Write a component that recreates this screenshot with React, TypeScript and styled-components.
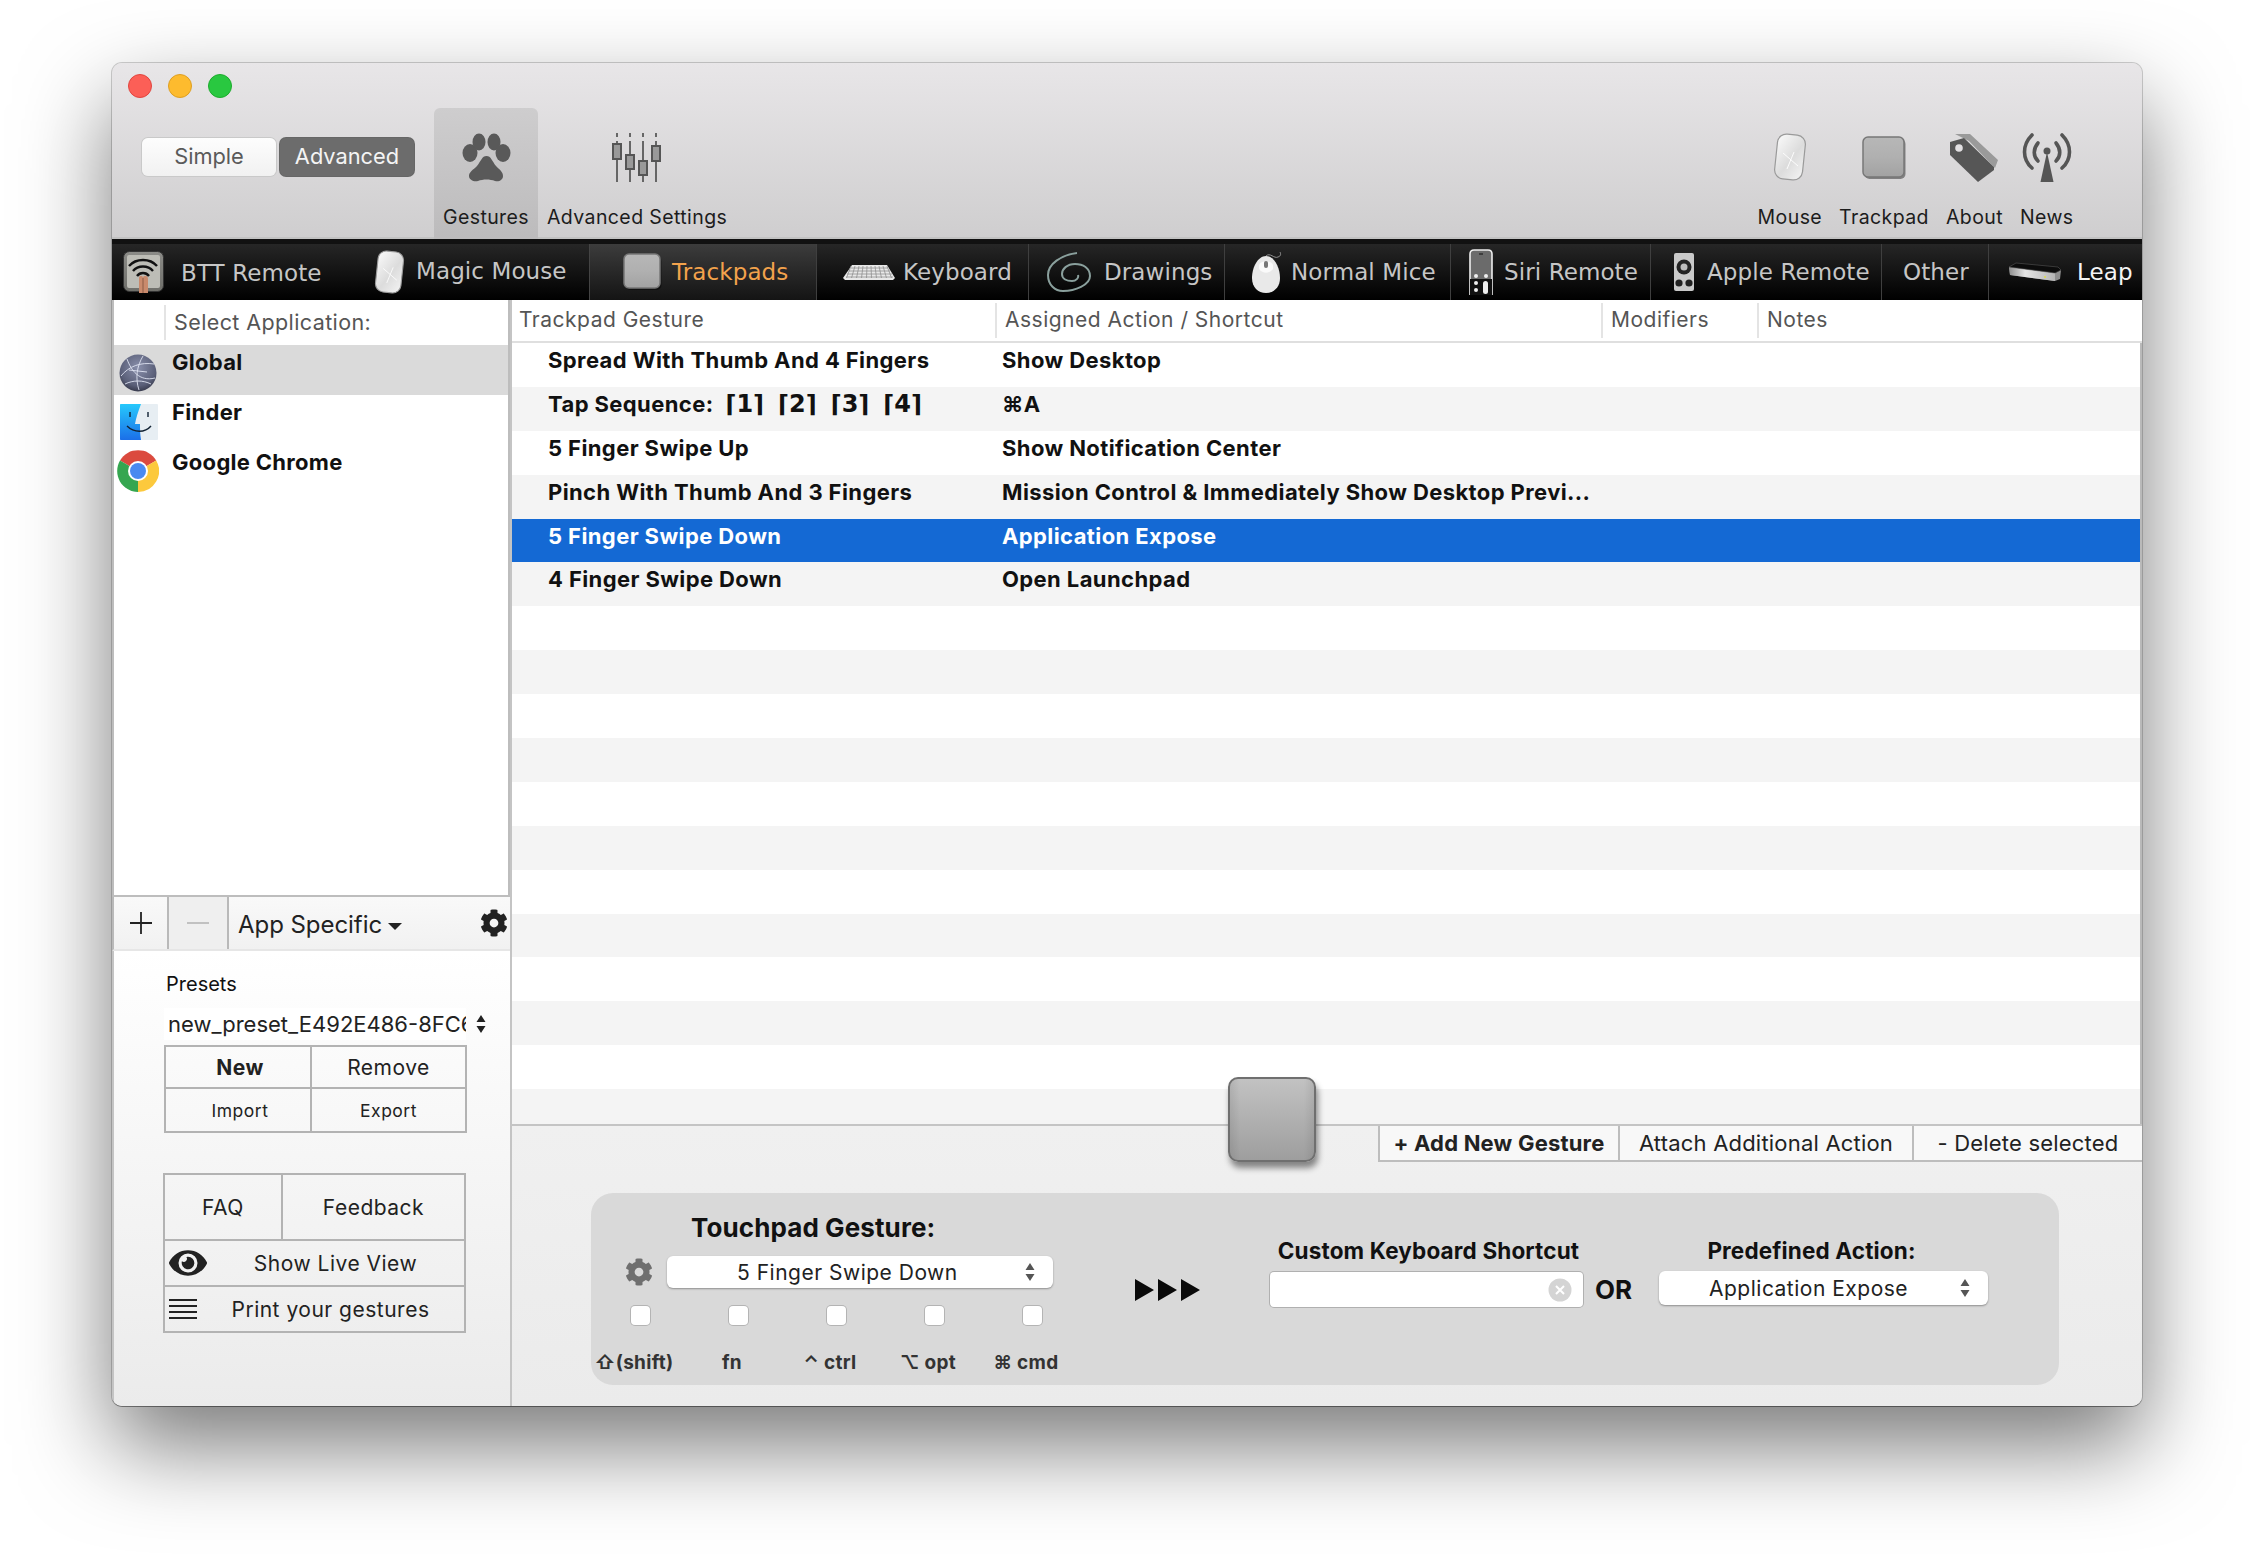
import React from "react";
import styled, { createGlobalStyle } from "styled-components";
import { FaCog, FaEye } from "react-icons/fa";

const Global = createGlobalStyle`
  html, body { margin: 0; padding: 0; background: #fff; width: 2254px; height: 1566px; overflow: hidden; }
  * { box-sizing: border-box; }
  body { font-family: Inter, "Noto Sans", "DejaVu Sans", sans-serif; }
`;

const Page = styled.div`
  width: 2254px; height: 1566px; padding: 63px 0 0 112px;
`;
const Win = styled.div`
  width: 2030px; height: 1343px; border-radius: 10px; display: flex; flex-direction: column;
  box-shadow: 0 40px 90px rgba(0,0,0,.53), 0 0 0 1px rgba(0,0,0,.18), 0 1px 0 rgba(0,0,0,.3);
  position: relative; overflow: hidden; background: #ececec;
`;
const TitleArea = styled.header`
  height: 176px; flex: none; background: linear-gradient(#e8e6e8, #cfcecf); display: flex; flex-direction: column;
  border-bottom: 2px solid #c2c2c2;
`;
const Lights = styled.div`
  height: 45px; flex: none; padding: 11px 0 0 16px; display: flex; gap: 16px;
`;
const Light = styled.span<{ $c: string; $b: string }>`
  width: 24px; height: 24px; border-radius: 50%; background: ${p => p.$c}; border: 1px solid ${p => p.$b};
`;
const ToolRow = styled.div`
  flex: 1; display: flex; padding: 0 60px 0 30px;
`;
const Segment = styled.div`
  display: flex; gap: 4px; margin: 30px 20px 0 0;
`;
const SegBtn = styled.div<{ $on?: boolean }>`
  width: 134px; height: 38px; border-radius: 6px; display: flex; align-items: center; justify-content: center;
  font-size: 21.8px; padding-bottom: 2px;
  color: ${p => (p.$on ? "#f4f4f4" : "#5a5a5a")};
  background: ${p => (p.$on ? "#6c6c6c" : "linear-gradient(#fdfdfd,#f1f1f1)")};
  box-shadow: 0 0 0 1px ${p => (p.$on ? "#666" : "#c9c9c9")};
`;
const ToolItem = styled.div<{ $active?: boolean }>`
  display: flex; flex-direction: column; align-items: center; padding: 25px 9px 0;
  border-radius: 6px 6px 0 0; height: 131px;
  background: ${p => (p.$active ? "linear-gradient(#cecdce,#bcbbbc)" : "transparent")};
`;
const ToolIcon = styled.div<{ $top?: number }>`
  height: 50px; display: flex; align-items: flex-start; justify-content: center; padding-top: ${p => p.$top ?? 0}px;
`;
const ToolLabel = styled.div`
  margin-top: 22px; font-size: 19.5px; line-height: 24px; color: #1c1c1c; white-space: nowrap; letter-spacing: .4px;
`;
const RightTools = styled.div`
  margin-left: auto; display: flex;
  & > div { padding-left: 8.5px; padding-right: 8.5px; }
`;

const TabBar = styled.nav`
  height: 61px; flex: none; display: flex; border-top: 5px solid #111;
  background: linear-gradient(#262626, #000);
`;
const Tab = styled.div<{ $w: number; $pl: number; $sep?: boolean; $active?: boolean }>`
  width: ${p => p.$w}px; flex: none; padding-left: ${p => p.$pl}px; display: flex; align-items: center;
  ${p => (p.$sep ? "border-right: 1px solid #3f3f3f;" : "")}
  ${p => (p.$active ? "background: linear-gradient(#3c3c3c,#141414); border-left: 1px solid #444;" : "")}
`;
const TabText = styled.span<{ $x: number; $on?: boolean; $white?: boolean; $dy?: number }>`
  font-family: "DejaVu Sans", sans-serif; font-size: 23px; white-space: nowrap; margin-left: ${p => p.$x}px;
  position: relative; top: ${p => p.$dy ?? 0}px;
  color: ${p => (p.$on ? "#f2a24c" : p.$white ? "#f4f4f4" : "#c6c6c6")};
  letter-spacing: .1px;
`;

const Main = styled.div`
  flex: 1; display: flex; min-height: 0;
`;
const Sidebar = styled.aside`
  width: 398px; flex: none; display: flex; flex-direction: column;
`;
const AppList = styled.div`
  height: 597px; flex: none; background: #fff; border: solid #bdbdbd; border-width: 0 2px 2px;
`;
const AppHeader = styled.div`
  height: 45px; padding: 5px 0 0 50px;
`;
const AppHeaderCell = styled.div`
  height: 35px; border-left: 2px solid #e4e4e4; padding-left: 8px; font-size: 21.5px; line-height: 34px; color: #555;
  letter-spacing: .4px;
`;
const AppRow = styled.div<{ $on?: boolean }>`
  height: 50px; position: relative; padding-left: 58px; display: flex; font-size: 22px; font-weight: 700; color: #111;
  line-height: 34px; letter-spacing: .3px; background: ${p => (p.$on ? "#dadada" : "transparent")};
`;
const AppIcon = styled.span<{ $l: number; $t: number }>`
  position: absolute; left: ${p => p.$l}px; top: ${p => p.$t}px; display: flex;
`;
const BarRow = styled.div`
  height: 54px; flex: none; display: flex; align-items: stretch; background: linear-gradient(#f9f9f9,#f1f1f1);
  border-bottom: 2px solid #e6e6e6; border-left: 2px solid #b9b9b9;
`;
const BarBtn = styled.div<{ $w: number; $muted?: boolean }>`
  width: ${p => p.$w}px; border-right: 2px solid #b9b9b9; display: flex; align-items: center; justify-content: center;
  ${p => (p.$muted ? "background: #efefef;" : "")}
`;
const BarLabel = styled.div`
  flex: 1; padding: 2px 0 0 9px; display: flex; align-items: center; font-size: 24px; color: #222; letter-spacing: -.05px;
`;
const Caret = styled.span`
  margin: 5px 0 0 6px; border: 7px solid transparent; border-top: 7px solid #222; border-bottom: 0; width: 0; height: 0;
`;
const BarGear = styled.div`
  width: 35px; display: flex; align-items: center; padding-left: 5px; color: #222;
`;
const SideBottom = styled.div`
  flex: 1; background: linear-gradient(#fff, #ebebeb); padding: 0 0 0 50px; border-left: 2px solid #c4c4c4;
`;
const PresetTitle = styled.div`
  margin: 21px 0 0 2px; font-size: 20px; line-height: 24px; color: #111;
`;
const PresetSelect = styled.div`
  margin-top: 12px; display: flex; align-items: center; position: relative;
`;
const PresetValue = styled.div`
  width: 302px; height: 32px; background: #fff; padding-left: 4px; font-size: 22px; line-height: 32px; color: #222;
  overflow: hidden; white-space: nowrap;
`;
const CellTable = styled.div<{ $mt: number; $ml: number }>`
  margin: ${p => p.$mt}px 0 0 ${p => p.$ml}px; width: 303px; border: 2px solid #b3b3b3; display: flex; flex-direction: column;
`;
const CellRow = styled.div<{ $h: number; $line?: boolean }>`
  height: ${p => p.$h}px; display: flex; ${p => (p.$line ? "border-top: 2px solid #b3b3b3;" : "")}
`;
const Cell = styled.div<{ $w?: number; $size?: number; $bold?: boolean; $sep?: boolean; $pl?: number }>`
  ${p => (p.$w ? `width: ${p.$w}px; flex: none;` : "flex: 1;")}
  display: flex; align-items: center; justify-content: center; color: #222; letter-spacing: .5px;
  padding-left: ${p => p.$pl ?? 0}px;
  font-size: ${p => p.$size ?? 21}px; font-weight: ${p => (p.$bold ? 700 : 400)};
  ${p => (p.$sep ? "border-right: 2px solid #b3b3b3;" : "")}
`;
const IconCell = styled.div<{ $pl: number }>`
  flex: 1; display: flex; align-items: center; position: relative; font-size: 21px; color: #222;
  justify-content: center; letter-spacing: .5px; padding-left: ${p => p.$pl}px;
`;
const CellIcon = styled.span`
  position: absolute; left: 4px; top: 50%; transform: translateY(-50%); display: flex;
`;

const RightPane = styled.section`
  flex: 1; min-width: 0; display: flex; flex-direction: column; position: relative; border-left: 2px solid #c4c4c4;
`;
const HeaderRow = styled.div`
  height: 43px; flex: none; display: flex; background: #fff; border-bottom: 2px solid #dfdfdf; padding-top: 3px;
`;
const HeadCell = styled.div<{ $w?: number; $first?: boolean }>`
  ${p => (p.$w ? `width: ${p.$w}px; flex: none;` : "flex: 1;")}
  height: 35px; padding-left: ${p => (p.$first ? 7 : 8)}px; font-size: 21px; line-height: 34px; color: #555;
  letter-spacing: .5px;
  ${p => (p.$first ? "" : "border-left: 2px solid #e4e4e4;")}
`;
const Rows = styled.div`
  height: 781px; flex: none; overflow: hidden; background: #fff; border-right: 2px solid #b9b9b9;
`;
const Row = styled.div<{ $alt?: boolean; $sel?: boolean }>`
  height: 43.9px; display: flex; font-size: 22px; font-weight: 700; line-height: 34px; letter-spacing: .4px;
  color: ${p => (p.$sel ? "#fff" : "#111")};
  background: ${p => (p.$sel ? "#1469d4" : p.$alt ? "#f4f4f4" : "#fff")};
`;
const RowA = styled.div`
  width: 490px; flex: none; padding-left: 36px; white-space: nowrap;
`;
const RowB = styled.div`
  width: 600px; padding-left: 0; white-space: nowrap;
`;
const SeqKey = styled.span<{ $first?: boolean }>`
  font-family: "DejaVu Sans", sans-serif; font-size: 24px; letter-spacing: 0; margin-left: ${p => (p.$first ? 12 : 14)}px;
`;
const Bottom = styled.div`
  flex: 1; display: flex; flex-direction: column; background: linear-gradient(#f0f0f0,#ebebeb); border-top: 2px solid #c4c4c4;
`;
const ActionGroup = styled.div`
  align-self: flex-end; display: flex; height: 36px; background: #f8f8f8; border: solid #bdbdbd; border-width: 0 0 2px 2px;
`;
const ActionBtn = styled.div<{ $w: number; $bold?: boolean; $last?: boolean }>`
  width: ${p => p.$w}px; display: flex; align-items: center; justify-content: center; font-size: 22px; color: #222;
  letter-spacing: .2px;
  font-weight: ${p => (p.$bold ? 700 : 400)}; white-space: nowrap;
  ${p => (p.$last ? "" : "border-right: 2px solid #bdbdbd;")}
`;
const BigPad = styled.div`
  position: absolute; left: 716px; top: 777px; width: 88px; height: 85px; border-radius: 10px;
  background: linear-gradient(90deg, rgba(0,0,0,.08), transparent 12%, transparent 88%, rgba(0,0,0,.08)), linear-gradient(#c2c2c2, #b0b0b0 50%, #9e9e9e);
  border: 2px solid #6f6f6f; box-shadow: 2px 6px 6px rgba(0,0,0,.45); z-index: 2;
`;
const Panel = styled.div`
  margin: 31px 0 0 79px; width: 1468px; height: 192px; border-radius: 22px; background: #d9d9d9; display: flex;
  align-items: flex-start;
`;
const GestureCol = styled.div`
  width: 490px; flex: none; display: flex; flex-direction: column;
`;
const PanelTitle = styled.div`
  margin: 20px 0 0 100px; font-size: 26px; line-height: 30px; font-weight: 700; color: #111; letter-spacing: .1px;
`;
const SelectLine = styled.div`
  margin: 13px 0 0 34px; display: flex; align-items: center; gap: 14px; color: #6f6f6f;
`;
const Select = styled.div<{ $w: number; $h: number; $pl?: number; $mt?: number }>`
  width: ${p => p.$w}px; height: ${p => p.$h}px; flex: none; border-radius: 6px; background: #fff; position: relative;
  margin-top: ${p => p.$mt ?? 0}px; letter-spacing: .5px;
  box-shadow: 0 1px 2px rgba(0,0,0,.35); display: flex; align-items: center; font-size: 21px; color: #222;
  padding-left: ${p => p.$pl ?? 0}px;
`;
const SelectArrows = styled.span<{ $r: number }>`
  position: absolute; right: ${p => p.$r}px; top: 50%; transform: translateY(-50%); display: flex;
`;
const ModGrid = styled.div<{ $ml?: number; $mt: number }>`
  display: grid; grid-template-columns: repeat(5, 98px); margin: ${p => p.$mt}px 0 0 ${p => p.$ml ?? 0}px; justify-items: center;
`;
const Check = styled.span`
  width: 19px; height: 19px; border-radius: 4px; background: #fff; box-shadow: 0 0 0 1px #b4b4b4;
`;
const ModLabel = styled.span`
  font-size: 19px; font-weight: 700; color: #333; line-height: 24px; white-space: nowrap; letter-spacing: .3px;
  font-family: Inter, "DejaVu Sans", sans-serif;
`;
const Arrows = styled.div`
  margin: 86px 0 0 54px; width: 65px; flex: none; display: flex;
`;
const ShortcutCol = styled.div`
  margin: 46px 0 0 70px; width: 313px; flex: none; display: flex; flex-direction: column; align-items: center;
`;
const SmallTitle = styled.div<{ $mr?: number; $ml?: number }>`
  font-size: 22.5px; line-height: 24px; font-weight: 700; color: #111; white-space: nowrap; letter-spacing: .15px;
  margin-right: ${p => p.$mr ?? 0}px; margin-left: ${p => p.$ml ?? 0}px;
`;
const ShortcutInput = styled.div`
  margin-top: 9px; width: 313px; height: 35px; background: #fff; border-radius: 4px; box-shadow: 0 0 0 1px #b0b0b0;
  display: flex; align-items: center; justify-content: flex-end; padding-right: 11px;
`;
const Or = styled.div`
  margin: 82px 0 0 12px; width: 64px; flex: none; font-size: 26px; line-height: 30px; font-weight: 700; color: #111;
`;
const PredefCol = styled.div`
  margin-top: 46px; width: 329px; flex: none; display: flex; flex-direction: column; align-items: center;
`;

const Updown = ({ c = "#333" }: { c?: string }) => (
  <svg width="10" height="20" viewBox="0 0 10 20"><path d="M5 1 9.5 8H.5z M5 19 .5 12h9z" fill={c} /></svg>
);

const Paw = () => (
  <svg width="49" height="49" viewBox="0 0 49 49" fill="#595959">
    <ellipse cx="8" cy="20" rx="7.5" ry="9" />
    <ellipse cx="17" cy="9" rx="6.5" ry="8.5" />
    <ellipse cx="32" cy="9" rx="6.5" ry="8.5" />
    <ellipse cx="41" cy="20" rx="7.5" ry="9" />
    <path d="M24.5 23C29 23 30 28 34 33 38 37 41 39 41 43 41 47 37 49 33 48 28 46 21 46 16 48 12 49 7 47 7 43 7 39 11 37 15 33 19 28 20 23 24.5 23Z" />
  </svg>
);
const Sliders = () => (
  <svg width="50" height="49" viewBox="0 0 50 49">
    {[5, 18, 31, 44].map(x => (
      <g key={x} stroke="#666" strokeWidth="2">
        <path d={`M${x} 0v4M${x} 8v41`} />
      </g>
    ))}
    <g fill="#999" stroke="#555" strokeWidth="2">
      <rect x="1" y="11" width="8" height="15" />
      <rect x="14" y="22" width="8" height="14" />
      <rect x="27" y="28" width="8" height="14" />
      <rect x="40" y="13" width="8" height="15" />
    </g>
  </svg>
);
const MagicMouse = ({ w, h }: { w: number; h: number }) => (
  <svg width={w} height={h} viewBox="0 0 34 48">
    <defs>
      <linearGradient id="mm" x1="0" y1="0" x2="1" y2="1">
        <stop offset="0" stopColor="#fbfbfb" />
        <stop offset=".55" stopColor="#dcdcdc" />
        <stop offset="1" stopColor="#f4f4f4" />
      </linearGradient>
    </defs>
    <rect x="3" y="1.5" width="28" height="45" rx="9" transform="rotate(6 17 24)" fill="url(#mm)" stroke="#9a9a9a" strokeWidth="1.2" />
    <path d="M10 20 25 33M21 19 14 36" stroke="#fff" strokeWidth=".9" />
  </svg>
);
const PadIcon = ({ w, h }: { w: number; h: number }) => (
  <svg width={w + 3} height={h + 3} viewBox={`0 0 ${w + 3} ${h + 3}`}>
    <defs>
      <linearGradient id="pd" x1="0" y1="0" x2="0" y2="1">
        <stop offset="0" stopColor="#b7b7b7" />
        <stop offset=".5" stopColor="#b0b0b0" />
        <stop offset="1" stopColor="#a2a2a2" />
      </linearGradient>
    </defs>
    <rect x="2.5" y="3" width={w - 1} height={h - 1} rx="5" fill="#0006" />
    <rect x="1" y="1" width={w - 1} height={h - 1} rx="5" fill="url(#pd)" stroke="#777" strokeWidth="1.5" />
  </svg>
);
const Tag = () => (
  <svg width="50" height="50" viewBox="0 0 50 50">
    <path d="M6 1H21L49 27 46 35 20 8Z" fill="#9a9a9a" />
    <path d="M1 9 15 5 45 34V37L29 49 1 22Z" fill="#565656" />
    <circle cx="10" cy="15" r="3.8" fill="#e2e0e2" />
  </svg>
);
const Antenna = () => (
  <svg width="50" height="50" viewBox="0 0 50 50" fill="none" stroke="#555" strokeWidth="3.6" strokeLinecap="round">
    <path d="M10 2C0 12 0 26 10 35M40 2C50 12 50 26 40 35" />
    <path d="M16 10C11 16 11 23 16 28M34 10C39 16 39 23 34 28" />
    <circle cx="25" cy="18" r="3.5" fill="#555" stroke="none" />
    <path d="M25 19 18.5 49H31.5Z" fill="#555" stroke="none" />
  </svg>
);
const BttIcon = () => (
  <svg width="41" height="42" viewBox="0 0 41 42">
    <defs>
      <linearGradient id="bt" x1="0" y1="0" x2="0" y2="1">
        <stop offset="0" stopColor="#8c8c88" />
        <stop offset="1" stopColor="#6f6f6a" />
      </linearGradient>
    </defs>
    <rect x=".5" y=".5" width="40" height="40" rx="6" fill="url(#bt)" stroke="#333" />
    <rect x="4" y="4" width="33" height="33" rx="2" fill="#bdbdb6" />
    <g fill="none" stroke="#111" strokeWidth="2.4">
      <path d="M6 15C13 7 27 7 34 15" />
      <path d="M10 20C15 14 25 14 30 20" />
      <path d="M14 25C17 21 23 21 26 25" />
    </g>
    <path d="M16 42V27C16 24 20 24 20 27 20 24 25 24 25 28V42Z" fill="#c98a6c" />
    <path d="M20 27V42" stroke="#8a5a45" />
  </svg>
);
const KeyboardIcon = () => (
  <svg width="52" height="15" viewBox="0 0 52 15">
    <path d="M9 0H44L52 13 50 15H2L0 13Z" fill="#e8e8e8" />
    <g stroke="#8f8f8f" strokeWidth=".8">
      <path d="M8 3H45M6 6H47M4 9H49M3 12H50" />
      {[8, 12, 16, 20, 24, 28, 32, 36, 40, 44].map(x => (
        <path key={x} d={`M${x} 1 ${x + (x - 26) * 0.25} 13`} />
      ))}
    </g>
  </svg>
);
const Spiral = () => (
  <svg width="45" height="41" viewBox="0 0 45 41" fill="none" stroke="#8aa09d" strokeWidth="2">
    <path d="M30 1C14 3 1 12 1 23 1 33 8 39 16 39 28 39 43 33 43 24 43 16 36 12 28 12 20 12 15 17 15 22 15 27 20 29 25 29 29 29 32 26 31 23" />
  </svg>
);
const NormalMouse = () => (
  <svg width="34" height="42" viewBox="0 0 34 42">
    <path d="M14 5C18 1 22 8 26 6 29 5 29 3 28 1" fill="none" stroke="#aaa" strokeWidth=".8" />
    <path d="M14 5C22 5 28 16 28 27 28 36 22 42 14 42 6 42 0 36 0 27 0 16 6 5 14 5Z" fill="#e9e9e9" />
    <path d="M7 14C9 9 19 9 21 14V18C17 23 11 23 7 18Z" fill="#fafafa" />
    <rect x="12" y="10" width="4" height="7" rx="2" fill="#777" />
  </svg>
);
const SiriIcon = () => (
  <svg width="24" height="46" viewBox="0 0 24 46">
    <path d="M1 46V5C1 2.5 2.5 1 5 1H19C21.5 1 23 2.5 23 5V46Z" fill="#6b6b6b" stroke="#eee" strokeWidth="1.6" />
    <path d="M10 5H14" stroke="#111" strokeWidth="1" />
    <path d="M1 30H23V46H1Z" fill="#111" />
    <g fill="#eee">
      <circle cx="7" cy="27" r="2" />
      <circle cx="17" cy="27" r="2" />
      <circle cx="7" cy="34" r="2" />
      <circle cx="7" cy="41" r="2" />
      <rect x="14" y="32" width="5" height="13" rx="2.5" />
    </g>
  </svg>
);
const AppleRemote = () => (
  <svg width="20" height="38" viewBox="0 0 20 38">
    <rect width="20" height="38" rx="2" fill="#c9c9c9" />
    <circle cx="10" cy="14" r="7.5" fill="#222" />
    <circle cx="10" cy="14" r="3.5" fill="#bbb" />
    <circle cx="5" cy="30" r="3.6" fill="#222" />
    <circle cx="15" cy="30" r="3.6" fill="#222" />
  </svg>
);
const LeapIcon = () => (
  <svg width="54" height="20" viewBox="0 0 54 20">
    <defs>
      <linearGradient id="lp" x1="0" y1="0" x2="1" y2="0">
        <stop offset="0" stopColor="#8f8f8f" />
        <stop offset=".35" stopColor="#e4e4e4" />
        <stop offset="1" stopColor="#b5b5b5" />
      </linearGradient>
    </defs>
    <path d="M1 5 47 11 53 8 52 17 47 19 2 13Z" fill="#8f8f8f" />
    <path d="M1 5 47 11V19L2 13Z" fill="url(#lp)" />
    <path d="M1 5 8 1 50 5 53 8 47 11Z" fill="#0c0c0c" stroke="#555" strokeWidth=".6" />
    <circle cx="37" cy="15" r="1" fill="#dd4" />
  </svg>
);
const Globe = () => (
  <svg width="38" height="38" viewBox="0 0 38 38">
    <defs>
      <radialGradient id="gl" cx=".5" cy=".35" r=".7">
        <stop offset="0" stopColor="#8a90ac" />
        <stop offset=".7" stopColor="#5a5f78" />
        <stop offset="1" stopColor="#2e3040" />
      </radialGradient>
    </defs>
    <circle cx="19" cy="19" r="18.5" fill="url(#gl)" />
    <g fill="none" stroke="#dfe3f2" strokeWidth=".9">
      <path d="M2 22C10 12 22 8 35 10M8 5C12 16 20 28 36 24M24 2C18 12 16 24 20 36M6 30C14 26 24 26 32 30M10 16 28 18" />
    </g>
  </svg>
);
const Finder = () => (
  <svg width="38" height="36" viewBox="0 0 38 36">
    <defs>
      <linearGradient id="fa" x1="0" y1="0" x2="0" y2="1">
        <stop offset="0" stopColor="#26c9fc" />
        <stop offset="1" stopColor="#1b6fe8" />
      </linearGradient>
    </defs>
    <rect width="38" height="36" rx="1" fill="#e7eef3" />
    <path d="M1 0H21C18 8 16 14 15 20H20C20 25 20 30 21 36H1C.4 36 0 35.6 0 35V1C0 .4.4 0 1 0Z" fill="url(#fa)" />
    <path d="M10 8V13M28 8V13" stroke="#123" strokeWidth="1.4" />
    <path d="M7 22C14 29 25 29 31 22" fill="none" stroke="#123" strokeWidth="1.4" />
  </svg>
);
const Chrome = () => (
  <svg width="42" height="42" viewBox="0 0 42 42">
    <path d="M21 21 3 10.5A21 21 0 0 1 39.2 10.5Z" fill="#db4a3e" />
    <path d="M21 21 39.2 10.5A21 21 0 0 1 21 42Z" fill="#fcc93d" />
    <path d="M21 21 21 42A21 21 0 0 1 3 10.5Z" fill="#35a650" />
    <circle cx="21" cy="21" r="10" fill="#fff" />
    <circle cx="21" cy="21" r="8" fill="#4a8af0" />
  </svg>
);
const ClearIcon = () => (
  <svg width="24" height="24" viewBox="0 0 24 24">
    <circle cx="12" cy="12" r="11.5" fill="#d4d4d4" />
    <path d="M8 8 16 16M16 8 8 16" stroke="#fff" strokeWidth="2" />
  </svg>
);

const rows: [React.ReactNode, string][] = [
  ["Spread With Thumb And 4 Fingers", "Show Desktop"],
  [
    <>
      Tap Sequence:
      <SeqKey $first>⌈1⌉</SeqKey>
      <SeqKey>⌈2⌉</SeqKey>
      <SeqKey>⌈3⌉</SeqKey>
      <SeqKey>⌈4⌉</SeqKey>
    </>,
    "⌘A",
  ],
  ["5 Finger Swipe Up", "Show Notification Center"],
  ["Pinch With Thumb And 3 Fingers", "Mission Control & Immediately Show Desktop Previ..."],
  ["5 Finger Swipe Down", "Application Expose"],
  ["4 Finger Swipe Down", "Open Launchpad"],
  ...Array.from({ length: 12 }, () => ["", ""] as [string, string]),
];

export default function App() {
  return (
    <Page>
      <Global />
      <Win>
        <TitleArea>
          <Lights>
            <Light $c="#fc5f57" $b="#e1453f" />
            <Light $c="#fdbb2e" $b="#de9f22" />
            <Light $c="#29c840" $b="#1dac2d" />
          </Lights>
          <ToolRow>
            <Segment>
              <SegBtn>Simple</SegBtn>
              <SegBtn $on>Advanced</SegBtn>
            </Segment>
            <ToolItem $active>
              <ToolIcon><Paw /></ToolIcon>
              <ToolLabel>Gestures</ToolLabel>
            </ToolItem>
            <ToolItem>
              <ToolIcon><Sliders /></ToolIcon>
              <ToolLabel>Advanced Settings</ToolLabel>
            </ToolItem>
            <RightTools>
              <ToolItem><ToolIcon><MagicMouse w={34} h={48} /></ToolIcon><ToolLabel>Mouse</ToolLabel></ToolItem>
              <ToolItem><ToolIcon $top={3}><PadIcon w={42} h={41} /></ToolIcon><ToolLabel>Trackpad</ToolLabel></ToolItem>
              <ToolItem><ToolIcon><Tag /></ToolIcon><ToolLabel>About</ToolLabel></ToolItem>
              <ToolItem><ToolIcon><Antenna /></ToolIcon><ToolLabel>News</ToolLabel></ToolItem>
            </RightTools>
          </ToolRow>
        </TitleArea>
        <TabBar>
          <Tab $w={254} $pl={11}><BttIcon /><TabText $x={17} $dy={1}>BTT Remote</TabText></Tab>
          <Tab $w={223} $pl={8}><MagicMouse w={31} h={46} /><TabText $x={11} $dy={-1}>Magic Mouse</TabText></Tab>
          <Tab $w={228} $pl={33} $sep $active><PadIcon w={37} h={35} /><TabText $x={9} $on>Trackpads</TabText></Tab>
          <Tab $w={212} $pl={26} $sep><KeyboardIcon /><TabText $x={8}>Keyboard</TabText></Tab>
          <Tab $w={196} $pl={18} $sep><Spiral /><TabText $x={12}>Drawings</TabText></Tab>
          <Tab $w={226} $pl={27} $sep><NormalMouse /><TabText $x={5}>Normal Mice</TabText></Tab>
          <Tab $w={200} $pl={18} $sep><SiriIcon /><TabText $x={11}>Siri Remote</TabText></Tab>
          <Tab $w={231} $pl={23} $sep><AppleRemote /><TabText $x={13}>Apple Remote</TabText></Tab>
          <Tab $w={107} $pl={21} $sep><TabText $x={0}>Other</TabText></Tab>
          <Tab $w={153} $pl={19}><LeapIcon /><TabText $x={15} $white>Leap</TabText></Tab>
        </TabBar>
        <Main>
          <Sidebar>
            <AppList>
              <AppHeader><AppHeaderCell>Select Application:</AppHeaderCell></AppHeader>
              <AppRow $on><AppIcon $l={5} $t={9}><Globe /></AppIcon>Global</AppRow>
              <AppRow><AppIcon $l={6} $t={9}><Finder /></AppIcon>Finder</AppRow>
              <AppRow><AppIcon $l={3} $t={5}><Chrome /></AppIcon>Google Chrome</AppRow>
            </AppList>
            <BarRow>
              <BarBtn $w={55}>
                <svg width="24" height="24" viewBox="0 0 24 24"><path d="M12 1V23M1 12H23" stroke="#222" strokeWidth="1.8" /></svg>
              </BarBtn>
              <BarBtn $w={60} $muted>
                <svg width="24" height="24" viewBox="0 0 24 24"><path d="M1 12H23" stroke="#bbb" strokeWidth="1.8" /></svg>
              </BarBtn>
              <BarLabel>App Specific<Caret /></BarLabel>
              <BarGear><FaCog size={28} /></BarGear>
            </BarRow>
            <SideBottom>
              <PresetTitle>Presets</PresetTitle>
              <PresetSelect>
                <PresetValue>new_preset_E492E486-8FC6</PresetValue>
                <SelectArrows $r={24}><Updown c="#222" /></SelectArrows>
              </PresetSelect>
              <CellTable $mt={5} $ml={0}>
                <CellRow $h={40}>
                  <Cell $w={146} $bold $sep $pl={4}>New</Cell>
                  <Cell>Remove</Cell>
                </CellRow>
                <CellRow $h={44} $line>
                  <Cell $w={146} $size={17.5} $sep $pl={4}>Import</Cell>
                  <Cell $size={17.5}>Export</Cell>
                </CellRow>
              </CellTable>
              <CellTable $mt={40} $ml={-1}>
                <CellRow $h={64}>
                  <Cell $w={118} $sep>FAQ</Cell>
                  <Cell>Feedback</Cell>
                </CellRow>
                <CellRow $h={46} $line>
                  <IconCell $pl={42}><CellIcon><FaEye size={38} color="#222" /></CellIcon>Show Live View</IconCell>
                </CellRow>
                <CellRow $h={46} $line>
                  <IconCell $pl={32}>
                    <CellIcon>
                      <svg width="28" height="20" viewBox="0 0 28 20"><path d="M0 1H28M0 7H28M0 13H28M0 19H28" stroke="#222" strokeWidth="1.8" /></svg>
                    </CellIcon>
                    Print your gestures
                  </IconCell>
                </CellRow>
              </CellTable>
            </SideBottom>
          </Sidebar>
          <RightPane>
            <HeaderRow>
              <HeadCell $w={483} $first>Trackpad Gesture</HeadCell>
              <HeadCell $w={606}>Assigned Action / Shortcut</HeadCell>
              <HeadCell $w={156}>Modifiers</HeadCell>
              <HeadCell>Notes</HeadCell>
            </HeaderRow>
            <Rows>
              {rows.map((r, i) => (
                <Row key={i} $alt={i % 2 === 1} $sel={i === 4}>
                  <RowA>{r[0]}</RowA>
                  <RowB>{r[1]}</RowB>
                </Row>
              ))}
            </Rows>
            <Bottom>
              <ActionGroup>
                <ActionBtn $w={240} $bold>+ Add New Gesture</ActionBtn>
                <ActionBtn $w={294}>Attach Additional Action</ActionBtn>
                <ActionBtn $w={228} $last>- Delete selected</ActionBtn>
              </ActionGroup>
              <Panel>
                <GestureCol>
                  <PanelTitle>Touchpad Gesture:</PanelTitle>
                  <SelectLine>
                    <FaCog size={28} />
                    <Select $w={386} $h={32} $pl={70}>
                      5 Finger Swipe Down
                      <SelectArrows $r={18}><Updown c="#555" /></SelectArrows>
                    </Select>
                  </SelectLine>
                  <ModGrid $mt={18}>
                    <Check /><Check /><Check /><Check /><Check />
                  </ModGrid>
                  <ModGrid $mt={26} $ml={-6}>
                    <ModLabel>⇧(shift)</ModLabel>
                    <ModLabel>fn</ModLabel>
                    <ModLabel>⌃ ctrl</ModLabel>
                    <ModLabel>⌥ opt</ModLabel>
                    <ModLabel>⌘ cmd</ModLabel>
                  </ModGrid>
                </GestureCol>
                <Arrows>
                  <svg width="65" height="22" viewBox="0 0 65 22"><path d="M0 0 19 11 0 22ZM23 0 42 11 23 22ZM46 0 65 11 46 22Z" fill="#0a0a0a" /></svg>
                </Arrows>
                <ShortcutCol>
                  <SmallTitle $ml={4}>Custom Keyboard Shortcut</SmallTitle>
                  <ShortcutInput><ClearIcon /></ShortcutInput>
                </ShortcutCol>
                <Or>OR</Or>
                <PredefCol>
                  <SmallTitle $mr={24}>Predefined Action:</SmallTitle>
                  <Select $w={329} $h={34} $pl={50} $mt={8}>
                    Application Expose
                    <SelectArrows $r={18}><Updown c="#555" /></SelectArrows>
                  </Select>
                </PredefCol>
              </Panel>
              <BigPad />
            </Bottom>
          </RightPane>
        </Main>
      </Win>
    </Page>
  );
}
